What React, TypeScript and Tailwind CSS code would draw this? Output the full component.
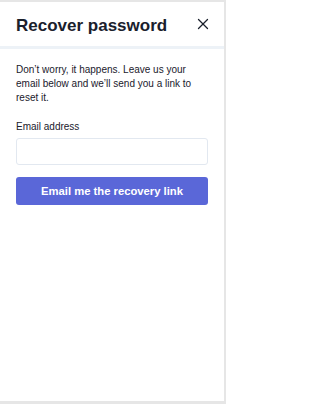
import { X } from "lucide-react";

const App = () => {
  return (
    <div className="w-[226px] h-[404px] bg-[#e6e6e6] pt-[2px] pr-[2px] pb-[3px] font-['Liberation_Sans',Arial,sans-serif] text-[#1a202c]">
      <div className="bg-white h-[399px] flex flex-col">
        <div className="flex items-center justify-between pl-4 pr-[12px] pt-[3px] h-[47px] border-b-[3px] border-[#edf2f7]">
          <h1 className="text-[17px] font-bold leading-none">Recover password</h1>
          <button className="text-[#1a202c] -mt-[3px]">
            <X className="w-[18px] h-[18px]" strokeWidth={1.7} />
          </button>
        </div>
        <div className="px-4 pt-[14px]">
          <p className="text-[10px] leading-[14px] text-[#1a202c]">
            Don’t worry, it happens. Leave us your email below and we’ll send you a link to reset it.
          </p>
          <label className="block mt-[15px] text-[10px] leading-[14px] text-[#1a202c]">Email address</label>
          <input
            type="email"
            className="block mt-[4px] w-full h-[27px] rounded-[3px] border border-[#e2e8f0] bg-white px-2 text-[11px] outline-none"
          />
          <button className="mt-[12px] w-full h-[28px] rounded-[3px] bg-[#5a67d8] text-white text-[11.25px] font-bold">
            Email me the recovery link
          </button>
        </div>
      </div>
    </div>
  );
};

export default App;
